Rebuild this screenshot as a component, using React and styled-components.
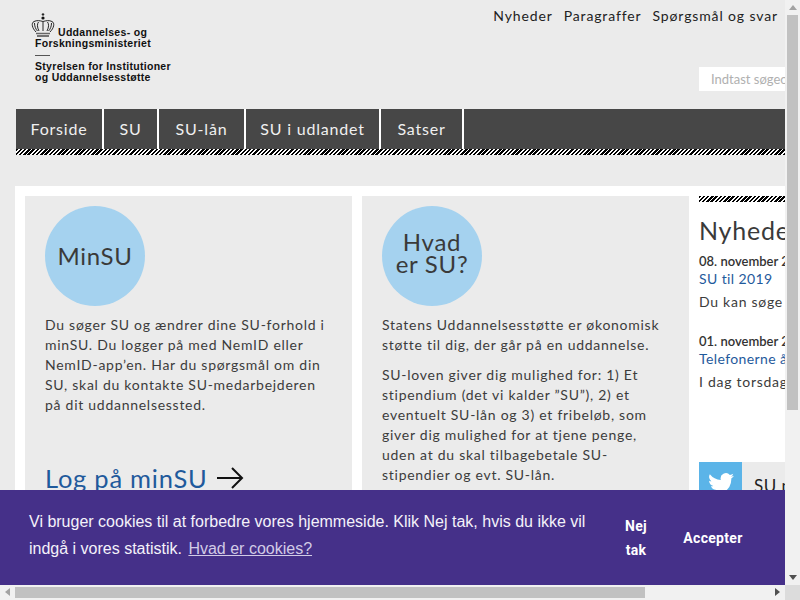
import styled, { createGlobalStyle } from 'styled-components';

const GlobalStyle = createGlobalStyle`
    html, body {
        margin: 0;
        padding: 0;
        background: #ebebeb;
        overflow: hidden;
    }
`;

const hatch = `repeating-linear-gradient(135deg, #000 0, #000 1.7px, #fff 1.7px, #fff 3px)`;
const bodyFont = `Lato, "Noto Sans", sans-serif`;

const Frame = styled.div`
    display: grid;
    grid-template-columns: 785px 15px;
    grid-template-rows: 585px 15px;
    width: 800px;
    height: 600px;
    overflow: hidden;
`;

const Viewport = styled.div`
    position: relative;
    overflow: hidden;
    background: #ebebeb;
`;

const Page = styled.div`
    width: 1020px;
    padding-left: 16px;
    font-family: ${bodyFont};
    color: #333;
`;

const Header = styled.header`
    display: flex;
    justify-content: space-between;
    width: 769px;
    height: 109px;
`;

const Logo = styled.div`
    padding: 13px 0 0 19px;
    font-family: "Liberation Sans", sans-serif;
    font-weight: 700;
    font-size: 10.5px;
    line-height: 11px;
    letter-spacing: 0.3px;
    color: #111;
`;

const LogoTop = styled.div`
    display: flex;
    align-items: flex-end;
    gap: 3px;
    height: 25px;
    margin-left: -4px;
`;

const LogoRule = styled.div`
    width: 15px;
    height: 1px;
    margin: 6px 0 5px;
    background: #555;
`;

const HeaderRight = styled.div`
    display: flex;
    flex-direction: column;
    align-items: flex-end;
    overflow: hidden;
`;

const UtilNav = styled.nav`
    display: flex;
    gap: 11px;
    padding: 7px 7px 0 0;
    font-size: 14px;
    line-height: 17px;
    letter-spacing: 0.87px;
    color: #222;
`;

const SearchBox = styled.div`
    width: 86px;
    height: 24px;
    margin-top: 43px;
    padding-left: 12px;
    box-sizing: border-box;
    background: #fff;
    font-size: 13px;
    line-height: 24px;
    white-space: nowrap;
    overflow: hidden;
    color: #b0b0b0;
`;

const MainNav = styled.nav`
    display: flex;
    width: 769px;
    height: 40px;
    background: #474747;
`;

const NavItem = styled.a`
    width: ${(p) => p.$width}px;
    box-sizing: border-box;
    border-right: 2px solid #fff;
    font-size: 16px;
    line-height: 40px;
    letter-spacing: 0.8px;
    text-align: center;
    color: #f0f0f0;
`;

const Hatch = styled.div`
    width: ${(p) => p.$width};
    height: ${(p) => p.$height}px;
    background: ${hatch};
`;

const Main = styled.main`
    display: flex;
    gap: 10px;
    margin: 31px 0 0 -1px;
    padding: 10px;
    background: #fff;
`;

const Card = styled.section`
    flex: none;
    width: 287px;
    height: 380px;
    padding: 10px 20px;
    background: #ebebeb;
`;

const Circle = styled.div`
    display: flex;
    align-items: center;
    justify-content: center;
    width: 100px;
    height: ${(p) => (p.$twoLines ? 94 : 100)}px;
    margin-bottom: 9px;
    padding-bottom: ${(p) => (p.$twoLines ? 6 : 0)}px;
    border-radius: 50%;
    background: #a5d2ef;
    font-size: 24px;
    line-height: 22px;
    letter-spacing: 0.7px;
    text-align: center;
    color: #3a3a3a;
`;

const Text = styled.p`
    margin: 0 0 10px;
    font-size: 14px;
    line-height: 20px;
    letter-spacing: 0.73px;
    white-space: nowrap;
    color: #3c3c3c;
`;

const LogOn = styled.a`
    display: flex;
    align-items: center;
    gap: 8px;
    margin-top: 48px;
    font-size: 25.5px;
    line-height: 30px;
    letter-spacing: 0.75px;
    color: #1f5a9c;
`;

const News = styled.aside`
    flex: none;
    width: 300px;
`;

const NewsTitle = styled.h2`
    margin: 13px 0 8px;
    font-size: 25px;
    font-weight: 400;
    line-height: 30px;
    letter-spacing: 0.8px;
    color: #3a3a3a;
`;

const NewsDate = styled.div`
    font-size: 13px;
    font-weight: 600;
    line-height: 16px;
    color: #333;
`;

const NewsLink = styled.a`
    display: block;
    font-size: 14px;
    line-height: 20px;
    letter-spacing: 0.4px;
    color: #1f5a9c;
`;

const NewsText = styled.p`
    margin: 3px 0 ${(p) => p.$bottom}px;
    font-size: 14px;
    line-height: 20px;
    letter-spacing: 0.73px;
    color: #3c3c3c;
`;

const TwitterRow = styled.div`
    display: flex;
    align-items: center;
    height: 43px;
    background: #ebebeb;
`;

const TwitterIcon = styled.div`
    display: flex;
    align-items: center;
    justify-content: center;
    width: 43px;
    height: 43px;
    margin-right: 12px;
    background: #5bb4e8;
`;

const TwitterText = styled.span`
    margin-top: 3px;
    font-size: 17px;
    letter-spacing: 0.5px;
    color: #222;
`;

const CookieBar = styled.div`
    position: absolute;
    left: 0;
    right: 0;
    bottom: 0;
    display: flex;
    align-items: center;
    height: 95px;
    padding: 0 15px 0 29px;
    box-sizing: border-box;
    background: #453089;
    font-family: "Liberation Sans", Arial, sans-serif;
    color: #f4f2fa;
`;

const CookieText = styled.div`
    flex: 1;
    padding-bottom: 6px;
    font-size: 16px;
    line-height: 27px;
`;

const CookieLink = styled.a`
    margin-left: 2px;
    color: #d2cbe6;
    text-decoration: underline;
`;

const CookieButton = styled.button`
    width: ${(p) => p.$width}px;
    padding: 0;
    border: 0;
    background: none;
    font-family: Roboto, "Liberation Sans", sans-serif;
    font-size: 14px;
    font-weight: 700;
    line-height: 24px;
    letter-spacing: 0.3px;
    color: #fff;
`;

const VTrack = styled.div`
    position: relative;
    background: #f1f1f1;
`;

const VThumb = styled.div`
    width: 11px;
    height: 395px;
    margin: 15px 0 0 2px;
    background: #c1c1c1;
`;

const HTrack = styled.div`
    position: relative;
    background: #f1f1f1;
`;

const HThumb = styled.div`
    width: 630px;
    height: 11px;
    margin: 2px 0 0 15px;
    background: #c1c1c1;
`;

const Corner = styled.div`
    background: #dcdcdc;
`;

const Arrow = styled.div`
    position: absolute;
    width: 0;
    height: 0;
    ${(p) => p.$dir === 'up' && `left: 4px; top: 5px; border: 4px solid transparent; border-top: 0; border-bottom: 5px solid #a3a3a3;`}
    ${(p) => p.$dir === 'down' && `left: 4px; bottom: 5px; border: 4px solid transparent; border-bottom: 0; border-top: 5px solid #505050;`}
    ${(p) => p.$dir === 'left' && `left: 5px; top: 3px; border: 4px solid transparent; border-left: 0; border-right: 5px solid #a3a3a3;`}
    ${(p) => p.$dir === 'right' && `right: 5px; top: 3px; border: 4px solid transparent; border-right: 0; border-left: 5px solid #505050;`}
`;

const Crown = () => (
    <svg width="24" height="25" viewBox="0 0 24 25" fill="none" stroke="#111" strokeWidth="0.9">
        <path d="M12 0v3M10.7 1.4h2.6" />
        <circle cx="12" cy="5" r="1.6" fill="#111" stroke="none" />
        <path d="M5 19C1 15 0 10 3 8.5c3-1.5 6-.8 9 0 3-.8 6-1.500 9 0 3 1.500 2 6.500-2 10.500" />
        <path d="M8 18C6 14 6 11 7.500 9M12 18V9M16 18c2-4 2-7 .5-9M3.500 10c0 3 1 6 3 8M20.500 10c0 3-1 6-3 8" />
        <path d="M5 20.500h14" strokeWidth="1.500" stroke="#666" />
        <path d="M6 23h12" strokeWidth="1.800" stroke="#666" />
    </svg>
);

const ArrowIcon = () => (
    <svg width="28" height="24" viewBox="0 0 28 24" fill="none" stroke="#111" strokeWidth="2">
        <path d="M1 12h25M16 2l10 10-10 10" />
    </svg>
);

const TwitterBird = () => (
    <svg width="26" height="22" viewBox="0 0 24 20" fill="#fff">
        <path d="M24 2.400a9.800 9.800 0 0 1-2.800.8A5 5 0 0 0 23.300.500a9.900 9.900 0 0 1-3.100 1.200 4.900 4.900 0 0 0-8.400 4.500A14 14 0 0 1 1.700.900a4.900 4.900 0 0 0 1.500 6.600 4.900 4.900 0 0 1-2.200-.6c0 2.400 1.700 4.400 3.900 4.900a4.900 4.900 0 0 1-2.200.1 4.900 4.900 0 0 0 4.600 3.400A9.900 9.900 0 0 1 0 17.300 14 14 0 0 0 21.500 4.900 10 10 0 0 0 24 2.400z" />
    </svg>
);

const navItems = [
    { label: 'Forside', width: 88 },
    { label: 'SU', width: 55 },
    { label: 'SU-lån', width: 87 },
    { label: 'SU i udlandet', width: 135 },
    { label: 'Satser', width: 83 },
];

export default function App() {
    return (
        <>
            <GlobalStyle />
            <Frame>
                <Viewport>
                    <Page>
                        <Header>
                            <Logo>
                                <LogoTop>
                                    <Crown />
                                    <span>Uddannelses- og</span>
                                </LogoTop>
                                <div>Forskningsministeriet</div>
                                <LogoRule />
                                <div>Styrelsen for Institutioner</div>
                                <div>og Uddannelsesstøtte</div>
                            </Logo>
                            <HeaderRight>
                                <UtilNav>
                                    <a>Nyheder</a>
                                    <a>Paragraffer</a>
                                    <a>Spørgsmål og svar</a>
                                </UtilNav>
                                <SearchBox>Indtast søgeord</SearchBox>
                            </HeaderRight>
                        </Header>
                        <MainNav>
                            {navItems.map((item) => (
                                <NavItem key={item.label} $width={item.width}>{item.label}</NavItem>
                            ))}
                        </MainNav>
                        <Hatch $width="769px" $height={6} />
                        <Main>
                            <Card>
                                <Circle>MinSU</Circle>
                                <Text>
                                    Du søger SU og ændrer dine SU-forhold i<br />
                                    minSU. Du logger på med NemID eller<br />
                                    NemID-app’en. Har du spørgsmål om din<br />
                                    SU, skal du kontakte SU-medarbejderen<br />
                                    på dit uddannelsessted.
                                </Text>
                                <LogOn>Log på minSU <ArrowIcon /></LogOn>
                            </Card>
                            <Card>
                                <Circle $twoLines>Hvad<br />er SU?</Circle>
                                <Text>
                                    Statens Uddannelsesstøtte er økonomisk<br />
                                    støtte til dig, der går på en uddannelse.
                                </Text>
                                <Text>
                                    SU-loven giver dig mulighed for: 1) Et<br />
                                    stipendium (det vi kalder ”SU”), 2) et<br />
                                    eventuelt SU-lån og 3) et fribeløb, som<br />
                                    giver dig mulighed for at tjene penge,<br />
                                    uden at du skal tilbagebetale SU-<br />
                                    stipendier og evt. SU-lån.
                                </Text>
                            </Card>
                            <News>
                                <Hatch $width="100%" $height={6} />
                                <NewsTitle>Nyheder</NewsTitle>
                                <NewsDate>08. november 2018</NewsDate>
                                <NewsLink>SU til 2019</NewsLink>
                                <NewsText $bottom={21}>Du kan søge SU til 2019</NewsText>
                                <NewsDate>01. november 2018</NewsDate>
                                <NewsLink>Telefonerne åbner kl. 12</NewsLink>
                                <NewsText $bottom={70}>I dag torsdag har vi lukket</NewsText>
                                <TwitterRow>
                                    <TwitterIcon><TwitterBird /></TwitterIcon>
                                    <TwitterText>SU på Twitter</TwitterText>
                                </TwitterRow>
                            </News>
                        </Main>
                    </Page>
                    <CookieBar>
                        <CookieText>
                            Vi bruger cookies til at forbedre vores hjemmeside. Klik Nej tak, hvis du ikke vil<br />
                            indgå i vores statistik. <CookieLink>Hvad er cookies?</CookieLink>
                        </CookieText>
                        <CookieButton $width={40}>Nej<br />tak</CookieButton>
                        <CookieButton $width={114}>Accepter</CookieButton>
                    </CookieBar>
                </Viewport>
                <VTrack>
                    <Arrow $dir="up" />
                    <VThumb />
                    <Arrow $dir="down" />
                </VTrack>
                <HTrack>
                    <Arrow $dir="left" />
                    <HThumb />
                    <Arrow $dir="right" />
                </HTrack>
                <Corner />
            </Frame>
        </>
    );
}
